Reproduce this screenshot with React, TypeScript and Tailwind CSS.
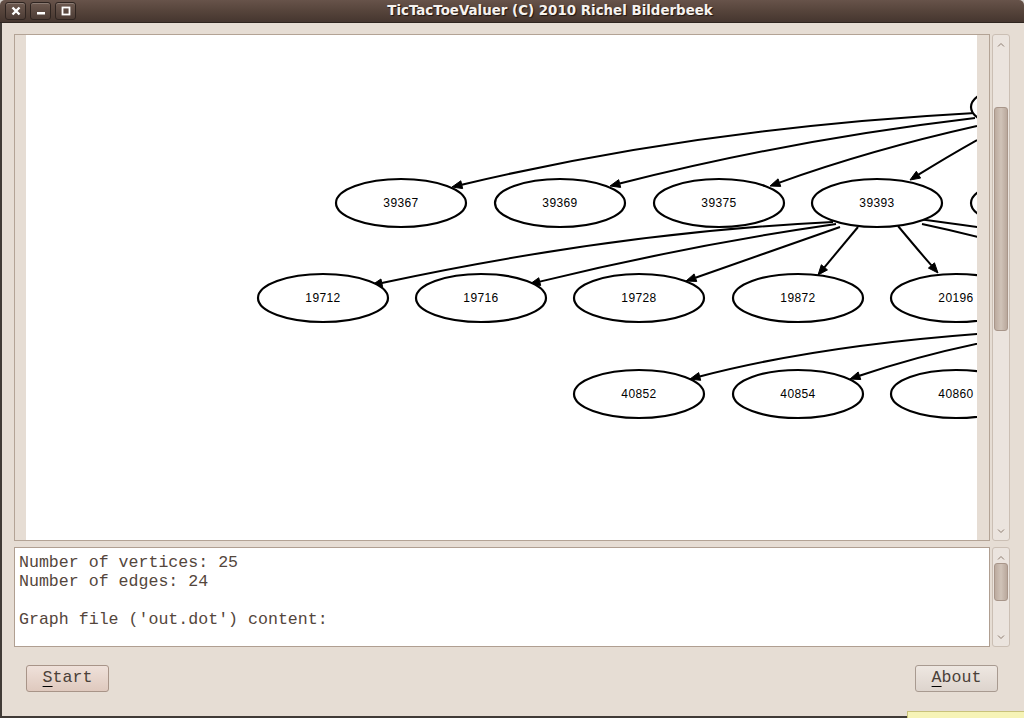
import React from 'react';

type Edge = [number, number, number, number, number, number, boolean];

const nodes: { x: number; y: number; label: string }[] = [
  { x: 1036, y: 107, label: '' },
  { x: 401, y: 203, label: '39367' },
  { x: 560, y: 203, label: '39369' },
  { x: 719, y: 203, label: '39375' },
  { x: 877, y: 203, label: '39393' },
  { x: 1036, y: 203, label: '' },
  { x: 323, y: 298, label: '19712' },
  { x: 481, y: 298, label: '19716' },
  { x: 639, y: 298, label: '19728' },
  { x: 798, y: 298, label: '19872' },
  { x: 956, y: 298, label: '20196' },
  { x: 639, y: 394, label: '40852' },
  { x: 798, y: 394, label: '40854' },
  { x: 956, y: 394, label: '40860' },
];

// x0 y0, control, tip, arrow?
const edges: Edge[] = [
  [975, 113, 700, 128, 452, 187, true],
  [975, 118, 790, 140, 610, 186, true],
  [977, 126, 870, 150, 770, 186, true],
  [977, 140, 945, 158, 910, 180, true],
  [833, 222, 620, 232, 372, 285, true],
  [836, 224, 690, 245, 530, 284, true],
  [840, 227, 760, 255, 686, 281, true],
  [858, 227, 838, 251, 818, 275, true],
  [898, 226, 918, 250, 938, 273, true],
  [990, 333, 820, 345, 690, 379, true],
  [990, 341, 920, 355, 850, 379, true],
  [918, 219, 950, 223, 990, 229, false],
  [922, 224, 955, 231, 990, 240, false],
];

function EdgePath({ e }: { e: Edge }) {
  const [x0, y0, cx, cy, x1, y1, arrow] = e;
  if (!arrow) {
    return <path d={`M${x0} ${y0} Q${cx} ${cy} ${x1} ${y1}`} fill="none" stroke="#000" strokeWidth={2} />;
  }
  const dx = x1 - cx;
  const dy = y1 - cy;
  const len = Math.hypot(dx, dy);
  const ux = dx / len;
  const uy = dy / len;
  const bx = x1 - ux * 10;
  const by = y1 - uy * 10;
  const nx = -uy * 4;
  const ny = ux * 4;
  return (
    <g>
      <path d={`M${x0} ${y0} Q${cx} ${cy} ${bx} ${by}`} fill="none" stroke="#000" strokeWidth={2} />
      <polygon points={`${x1},${y1} ${bx + nx},${by + ny} ${bx - nx},${by - ny}`} fill="#000" stroke="#000" strokeWidth={1} />
    </g>
  );
}

function Graph() {
  return (
    <svg width={951} height={505} className="block">
      <g transform="translate(-26 -35)">
        {edges.map((e, i) => (
          <EdgePath key={i} e={e} />
        ))}
        {nodes.map((n, i) => (
          <g key={i}>
            <ellipse cx={n.x} cy={n.y} rx={65} ry={24} fill="#fff" stroke="#000" strokeWidth={2.2} />
            {n.label && (
              <text
                x={n.x}
                y={n.y + 4}
                textAnchor="middle"
                fontSize={12}
                letterSpacing={0.4}
                fontFamily="'Liberation Sans', Arial, sans-serif"
                fill="#000"
              >
                {n.label}
              </text>
            )}
          </g>
        ))}
      </g>
    </svg>
  );
}

function Chevron({ up }: { up?: boolean }) {
  return (
    <svg width={8} height={5} className="block">
      <polyline
        points={up ? '1,4.5 4,1.5 7,4.5' : '1,0.5 4,3.5 7,0.5'}
        fill="none"
        stroke="#8c7c70"
        strokeWidth={1}
      />
    </svg>
  );
}

function ScrollBar({ thumbTop, thumbHeight, upPad, downPad }: { thumbTop: number; thumbHeight: number; upPad: number; downPad: number }) {
  return (
    <div className="relative w-[18px] h-full rounded-[3px] border border-[#cbbfb4] bg-[#ebe4de]">
      <div className="absolute left-0 right-0 flex justify-center" style={{ top: upPad }}>
        <Chevron up />
      </div>
      <div
        className="absolute left-[1px] right-[1px] rounded-[3px] border border-[#a8968a] bg-gradient-to-r from-[#bcab9f] via-[#d0c3b8] to-[#b9a89c]"
        style={{ top: thumbTop, height: thumbHeight }}
      />
      <div className="absolute left-0 right-0 flex justify-center" style={{ bottom: downPad }}>
        <Chevron />
      </div>
    </div>
  );
}

function WinButton({ children }: { children: React.ReactNode }) {
  return (
    <div className="w-[21px] h-[18px] rounded-[3px] border border-[#2e2420] bg-gradient-to-b from-[#6e5a50] to-[#4c3c35] shadow-[inset_0_1px_0_rgba(255,255,255,0.2)] flex items-center justify-center">
      {children}
    </div>
  );
}

export default function App() {
  const mono = { fontFamily: "'Liberation Mono', 'Courier New', monospace" };
  return (
    <div className="w-[1024px] h-[718px] overflow-hidden bg-[#d8d4d0] relative">
      <div className="flex flex-col h-full rounded-t-[5px] overflow-hidden">
        {/* title bar */}
        <div className="h-[23px] shrink-0 flex items-center bg-gradient-to-b from-[#67534a] via-[#56443b] to-[#45362f] border-b border-[#2f2520] relative">
          <div className="flex gap-[4px] pl-[5px]">
            <WinButton>
              <svg width={10} height={10}>
                <path d="M1.5 1.5 L8.5 8.5 M8.5 1.5 L1.5 8.5" stroke="#fff" strokeWidth={2.4} />
              </svg>
            </WinButton>
            <WinButton>
              <svg width={10} height={10}>
                <rect x={1} y={6} width={8} height={2.5} fill="#fff" />
              </svg>
            </WinButton>
            <WinButton>
              <svg width={10} height={10}>
                <rect x={1.5} y={1.5} width={7} height={7} fill="none" stroke="#fff" strokeWidth={1.8} />
              </svg>
            </WinButton>
          </div>
          <div
            className="flex-1 text-center text-[13.4px] font-bold text-[#f6f2ee] [text-shadow:1px_1px_1px_#1e1410]"
            style={{ fontFamily: "'DejaVu Sans', 'Open Sans', sans-serif" }}
          >
            TicTacToeValuer (C) 2010 Richel Bilderbeek
          </div>
        </div>

        {/* body */}
        <div className="flex-1 flex flex-col bg-[#e6ddd4] border-l-2 border-b-2 border-[#403a36] pl-[12px] pr-[14px] pt-[11px]">
          <div className="h-[507px] flex gap-[2px]">
            <div className="flex-1 border border-[#b3a395] flex pl-[11px] pr-[12px] bg-[#e6ddd4]">
              <div className="flex-1 bg-white overflow-hidden">
                <Graph />
              </div>
            </div>
            <ScrollBar thumbTop={72} thumbHeight={224} upPad={7} downPad={6} />
          </div>

          <div className="h-[100px] mt-[6px] flex gap-[2px]">
            <div
              className="flex-1 border border-[#b09f91] bg-white pt-[5px] pl-[4px] text-[16.6px] leading-[19px] text-[#54463c] whitespace-pre"
              style={mono}
            >
              <div>Number of vertices: 25</div>
              <div>Number of edges: 24</div>
              <div>{' '}</div>
              <div>Graph file ('out.dot') content:</div>
            </div>
            <ScrollBar thumbTop={15} thumbHeight={38} upPad={7} downPad={6} />
          </div>

          <div className="mt-[18px] flex justify-between px-[12px]">
            <button
              className="w-[83px] h-[27px] rounded-[3px] border border-[#a89488] bg-gradient-to-b from-[#efe1da] to-[#dfc9be] text-[16.6px] text-[#4a4038] flex items-center justify-center"
              style={mono}
            >
              <span className="underline underline-offset-[4px] decoration-[#000]">S</span>tart
            </button>
            <button
              className="w-[83px] h-[27px] rounded-[3px] border border-[#a89a90] bg-gradient-to-b from-[#eee7e1] to-[#ddd4cd] text-[16.6px] text-[#4a4038] flex items-center justify-center"
              style={mono}
            >
              <span className="underline underline-offset-[4px] decoration-[#000]">A</span>bout
            </button>
          </div>
        </div>
      </div>
      <div className="absolute left-[907px] top-[711px] w-[120px] h-[10px] bg-[#f6f3b6] border border-[#c8c27a]" />
    </div>
  );
}
